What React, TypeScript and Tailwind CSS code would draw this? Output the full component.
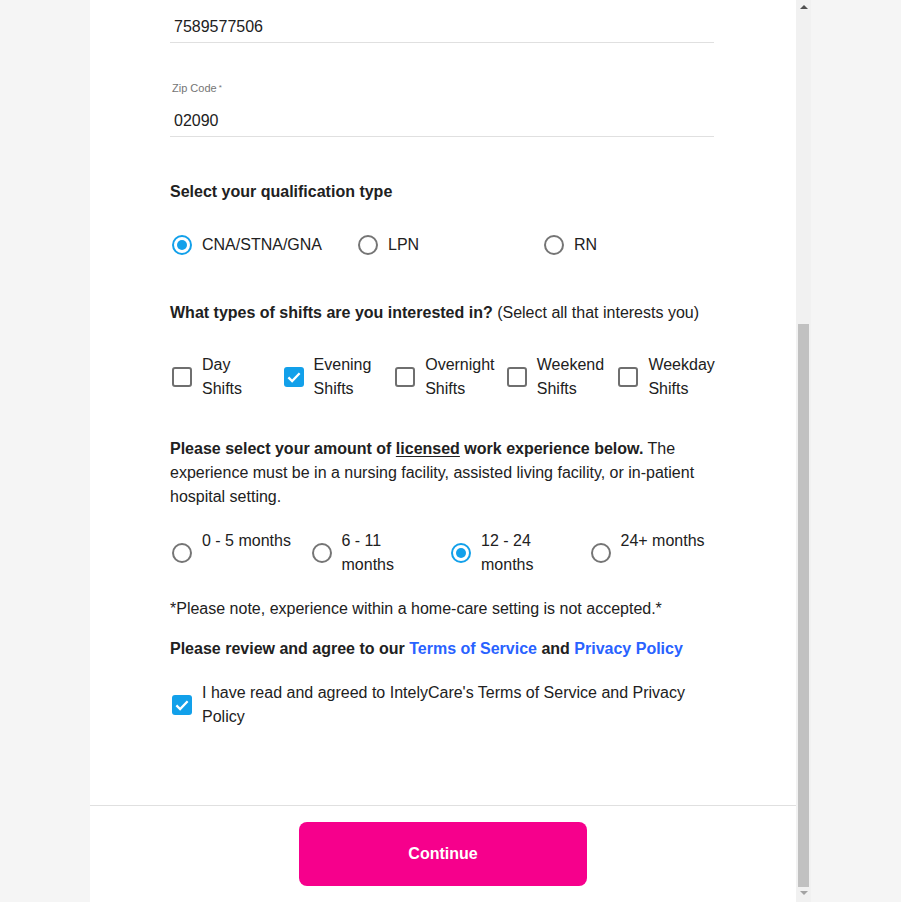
import { useLayoutEffect, useRef } from "react";

function Radio({ checked = false }: { checked?: boolean }) {
  return (
    <span
      className={`ml-[2px] flex h-5 w-5 shrink-0 items-center justify-center rounded-full border-2 ${
        checked ? "border-[#12a0ea]" : "border-[#757575]"
      }`}
    >
      {checked && <span className="h-2.5 w-2.5 rounded-full bg-[#12a0ea]" />}
    </span>
  );
}

function Checkbox({ checked = false }: { checked?: boolean }) {
  return checked ? (
    <span className="ml-[2px] flex h-5 w-5 shrink-0 items-center justify-center rounded-[3px] bg-[#12a0ea]">
      <svg viewBox="0 0 24 24" className="h-[18px] w-[18px]" fill="none" stroke="white" strokeWidth={3}>
        <path d="M4.5 12.5l5 5L19.5 7" />
      </svg>
    </span>
  ) : (
    <span className="ml-[2px] h-5 w-5 shrink-0 rounded-[3px] border-2 border-[#6f6f6f]" />
  );
}

function Field({ label, value, first = false }: { label: string; value: string; first?: boolean }) {
  return (
    <div className={`mr-[14px] ${first ? "" : "mt-[37px]"}`}>
      <div className="pl-[2px] text-[11px] leading-4 text-[#757575]">
        {label}
        <span className="ml-[2px] align-top text-[8px]">*</span>
      </div>
      <div className="mt-[13px] border-b border-[#e0e0e0] pb-[3px] pl-[4px] text-base leading-6">{value}</div>
    </div>
  );
}

const shifts = [
  { top: "Day", bottom: "Shifts", checked: false },
  { top: "Evening", bottom: "Shifts", checked: true },
  { top: "Overnight", bottom: "Shifts", checked: false },
  { top: "Weekend", bottom: "Shifts", checked: false },
  { top: "Weekday", bottom: "Shifts", checked: false },
];

const experience = [
  { top: "0 - 5 months", bottom: "", checked: false },
  { top: "6 - 11", bottom: "months", checked: false },
  { top: "12 - 24", bottom: "months", checked: true },
  { top: "24+ months", bottom: "", checked: false },
];

export default function App() {
  const scrollRef = useRef<HTMLDivElement>(null);

  useLayoutEffect(() => {
    if (scrollRef.current) scrollRef.current.scrollTop = scrollRef.current.scrollHeight;
  }, []);

  return (
    <div className="flex min-h-screen justify-center bg-[#f5f5f5] font-['Liberation_Sans',Arial,sans-serif] text-[#212121]">
      <div className="relative w-[721px] bg-white">
        <div ref={scrollRef} className="h-[902px] w-[706px] overflow-y-scroll">
          <div className="w-[638px] pb-[76px] pl-[80px]">
            {/* top of the form, scrolled out of view */}
            <div className="pt-[110px] pb-[56px] text-2xl font-bold leading-8">Tell us about yourself</div>
            <Field label="First Name" value="Jane" first />
            <Field label="Last Name" value="Doe" />
            <Field label="Email" value="jane.doe@example.com" />
            <Field label="Phone Number" value="7589577506" />
            <Field label="Zip Code" value="02090" />

            {/* qualification */}
            <h2 className="mt-[43px] text-base font-bold leading-6">Select your qualification type</h2>
            <div className="mt-[29px] grid grid-cols-3">
              {["CNA/STNA/GNA", "LPN", "RN"].map((q, i) => (
                <label key={q} className="flex items-center gap-[10px] text-base leading-6">
                  <Radio checked={i === 0} />
                  {q}
                </label>
              ))}
            </div>

            {/* shifts */}
            <p className="mt-[44px] text-base leading-6">
              <span className="font-bold">What types of shifts are you interested in?</span> (Select all that
              interests you)
            </p>
            <div className="mt-[28px] grid grid-cols-5">
              {shifts.map((s) => (
                <label key={s.top} className="flex items-center gap-[10px] text-base leading-6">
                  <Checkbox checked={s.checked} />
                  <span>
                    {s.top}
                    <br />
                    {s.bottom}
                  </span>
                </label>
              ))}
            </div>

            {/* experience */}
            <p className="mt-[36px] text-base leading-6">
              <span className="font-bold">
                Please select your amount of <span className="underline underline-offset-2">licensed</span> work
                experience below.
              </span>{" "}
              The experience must be in a nursing facility, assisted living facility, or in-patient hospital setting.
            </p>
            <div className="mt-[20px] grid grid-cols-4">
              {experience.map((e) => (
                <label key={e.top} className="flex h-12 items-center gap-[10px] text-base leading-6">
                  <Radio checked={e.checked} />
                  <span className="self-start">
                    {e.top}
                    {e.bottom && (
                      <>
                        <br />
                        {e.bottom}
                      </>
                    )}
                  </span>
                </label>
              ))}
            </div>

            <p className="mt-[20px] text-base leading-6">
              *Please note, experience within a home-care setting is not accepted.*
            </p>

            <p className="mt-[16px] text-base font-bold leading-6">
              Please review and agree to our <a className="text-[#2962ff]">Terms of Service</a> and{" "}
              <a className="text-[#2962ff]">Privacy Policy</a>
            </p>
            <label className="mt-[20px] flex items-center gap-[10px] text-base leading-6">
              <Checkbox checked />
              <span>I have read and agreed to IntelyCare's Terms of Service and Privacy Policy</span>
            </label>
          </div>

          <div className="sticky bottom-0 flex justify-center border-t border-[#e0e0e0] bg-white py-4">
            <button className="h-16 w-[288px] rounded-lg bg-[#f6008c] text-base font-bold text-white">
              Continue
            </button>
          </div>
        </div>

        {/* scrollbar (drawn, the headless page hides native ones) */}
        <div className="pointer-events-none absolute inset-y-0 right-0 w-[15px] bg-[#f1f1f1]">
          <span className="absolute left-[4px] top-[5px] h-0 w-0 border-x-[4px] border-b-[4px] border-x-transparent border-b-[#505050]" />
          <span className="absolute left-[2px] top-[324px] h-[563px] w-[11px] bg-[#c1c1c1]" />
          <span className="absolute bottom-[7px] left-[4px] h-0 w-0 border-x-[4px] border-t-[4px] border-x-transparent border-t-[#a3a3a3]" />
        </div>
      </div>
    </div>
  );
}
